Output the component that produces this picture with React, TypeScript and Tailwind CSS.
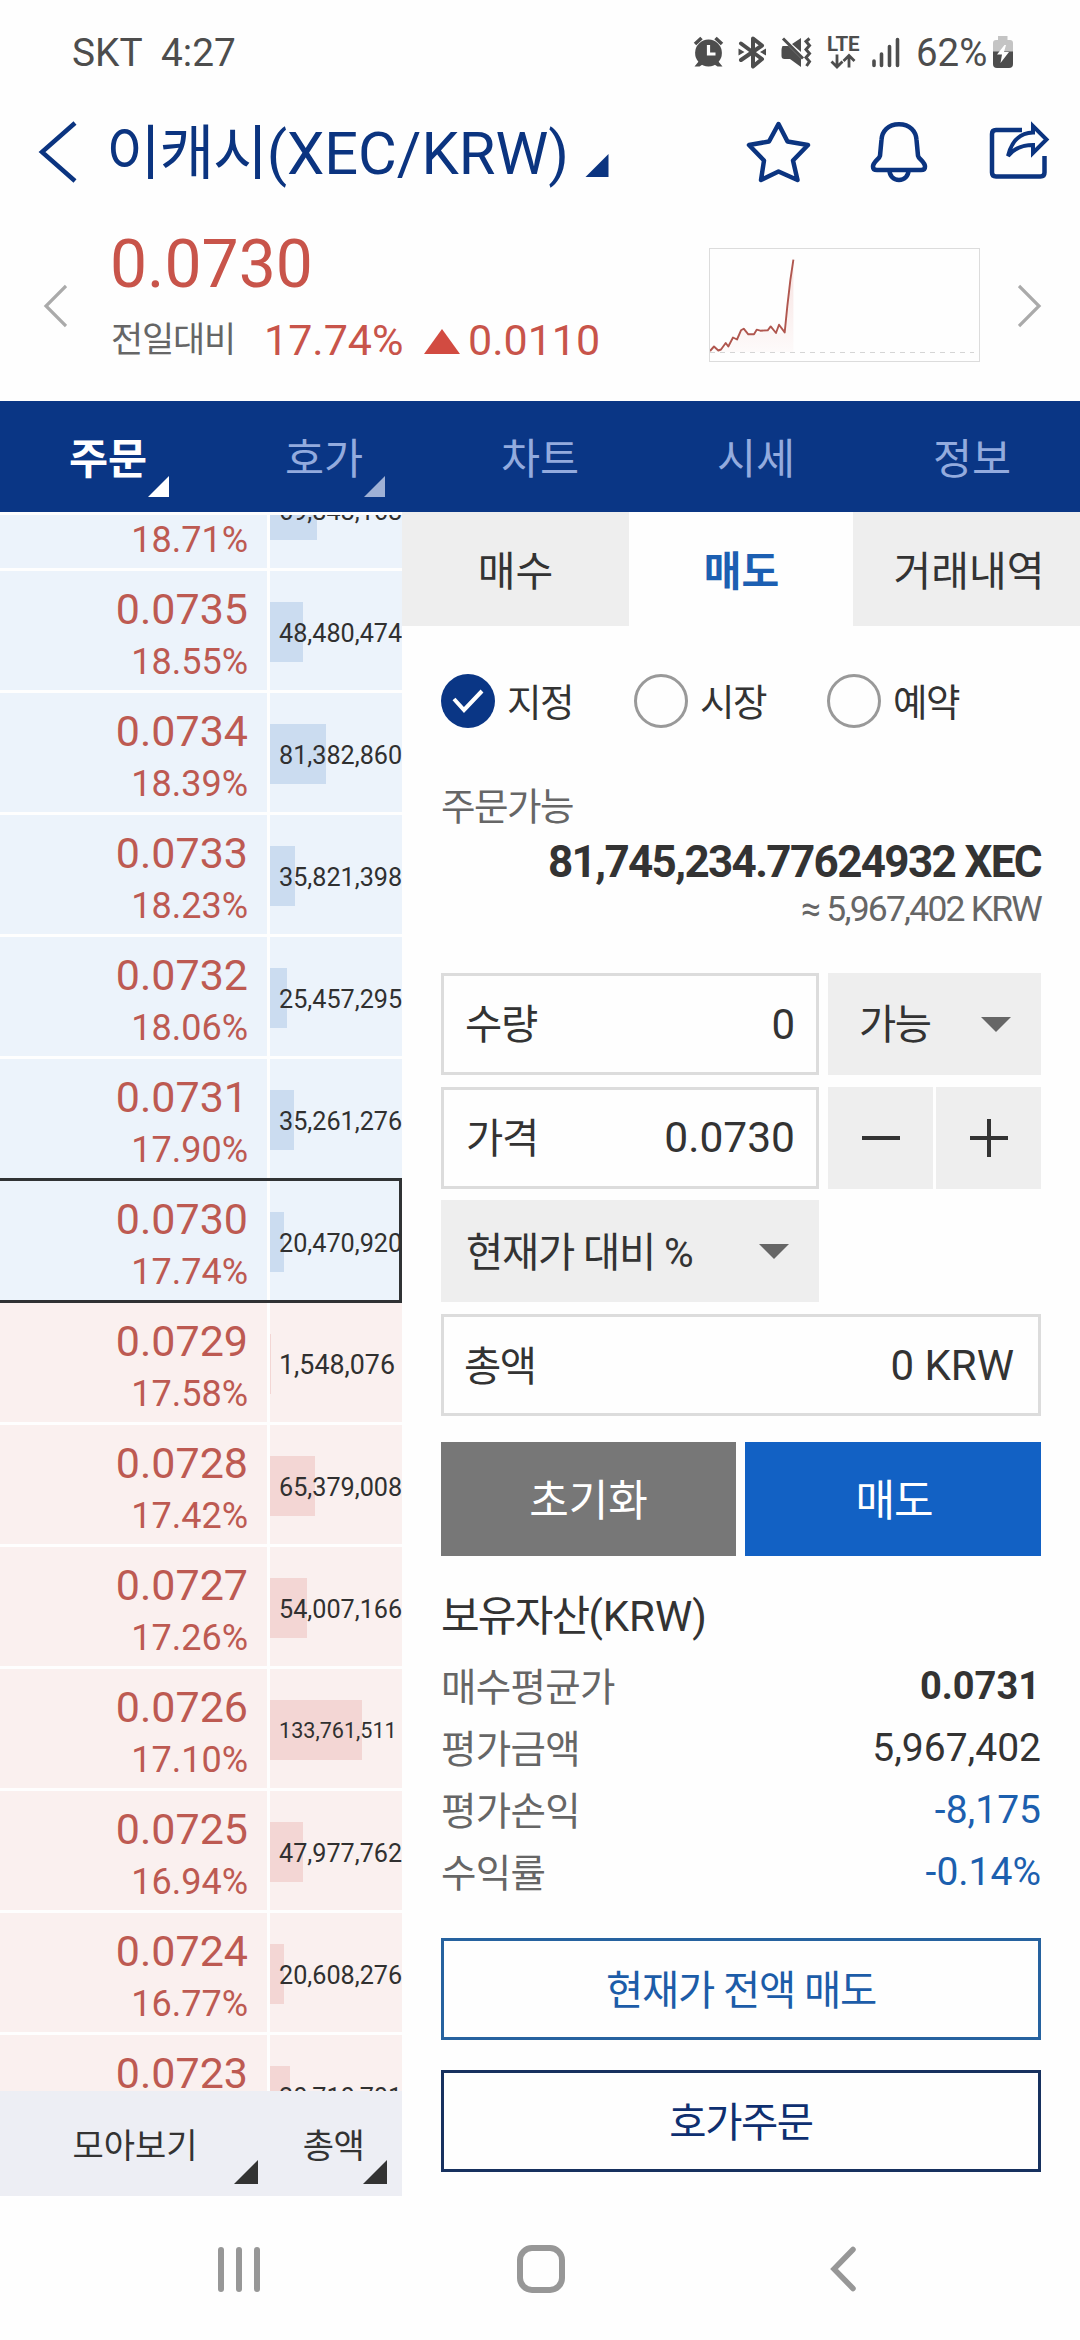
import React from "react";

type Level = { price: string; pct: string; qty: string; bar: number; size: string };

const L = "text-[25.2px]";
const levels: Level[] = [
  { price: "0.0736", pct: "18.71%", qty: "69,848,168", bar: 47, size: L },
  { price: "0.0735", pct: "18.55%", qty: "48,480,474", bar: 33, size: L },
  { price: "0.0734", pct: "18.39%", qty: "81,382,860", bar: 56, size: L },
  { price: "0.0733", pct: "18.23%", qty: "35,821,398", bar: 25, size: L },
  { price: "0.0732", pct: "18.06%", qty: "25,457,295", bar: 17, size: L },
  { price: "0.0731", pct: "17.90%", qty: "35,261,276", bar: 24, size: L },
  { price: "0.0730", pct: "17.74%", qty: "20,470,920", bar: 14, size: L },
  { price: "0.0729", pct: "17.58%", qty: "1,548,076", bar: 1, size: "text-[26.8px]" },
  { price: "0.0728", pct: "17.42%", qty: "65,379,008", bar: 45, size: L },
  { price: "0.0727", pct: "17.26%", qty: "54,007,166", bar: 37, size: L },
  { price: "0.0726", pct: "17.10%", qty: "133,761,511", bar: 92, size: "text-[21.6px]" },
  { price: "0.0725", pct: "16.94%", qty: "47,977,762", bar: 33, size: L },
  { price: "0.0724", pct: "16.77%", qty: "20,608,276", bar: 14, size: L },
  { price: "0.0723", pct: "16.61%", qty: "20,710,701", bar: 20, size: L },
];
const CURRENT = 6;

function Corner({ className }: { className: string }) {
  return (
    <svg viewBox="0 0 24 24" className={className} fill="currentColor">
      <path d="M24 0V24H0Z" />
    </svg>
  );
}

function Caret() {
  return (
    <svg viewBox="0 0 30 15" className="h-[15px] w-[30px] text-[#666]" fill="currentColor">
      <path d="M0 0H30L15 15Z" />
    </svg>
  );
}

function StatusBar() {
  return (
    <div className="flex h-[92px] items-start pt-[30px] pl-[72px] text-[38.8px] leading-[45px] text-[#4d4d4d]">
      <span className="w-[89px]">SKT</span>
      <span>4:27</span>
      <svg viewBox="690 1 226 45" className="ml-auto h-[45px] w-[226px]" fill="none" stroke="#4d4d4d">
        <g fill="#4d4d4d" stroke="none">
          <circle cx="708.5" cy="24" r="13.4" />
          <path d="M699 32l-4.500 5.500h5l3-2zM718 32l4.500 5.500h-5l-3-2z" />
        </g>
        <path d="M695 15l6.500-6M722 15l-6.500-6" strokeWidth="3.600" />
        <path d="M708.500 16v9h7" stroke="#fff" strokeWidth="3.200" />
        <path d="M741 14.500l21 15.500-9 7.500V9.500l9 7-21 14.500" strokeWidth="4" strokeLinejoin="round" strokeLinecap="round" />
        <path d="M738.500 19.500l6 3.500-6 3.500zM766 19.500l-6 3.500 6 3.500z" fill="#4d4d4d" stroke="none" />
        <path d="M782.500 17h6l12.500 12.500v8.500l-11-8h-5.500q-3 0-3-3v-6q0-2 1-4zM801 9v14l-9-8z" fill="#4d4d4d" stroke="none" />
        <path d="M783 9.500l20 20" strokeWidth="3" />
        <path d="M809.500 9.500l-3.500 3 3.500 4-3.500 4 3.500 4-3.500 4 3.500 4-3 4.500" strokeWidth="3" />
        <text x="827" y="21.500" fontSize="20.500" fontWeight="700" fill="#4d4d4d" stroke="none" textLength="32.500">LTE</text>
        <path d="M837 25.500v12M831.500 32.500l5.500 5.500 5.500-5.500M849 38.500V26.500M843.500 32l5.500-5.500 5.500 5.500" strokeWidth="2.800" />
        <path d="M874 36.500v-4.500M881.500 36.500V25M889.500 36.500V17.500M897.500 36.500V10.500" strokeWidth="3.600" strokeLinecap="round" />
      </svg>
      <span className="w-[77px] text-[38.4px]">62%</span>
      <svg viewBox="0 0 20 32" className="mt-[6px] mr-[67px] h-[32px] w-[20px] shrink-0">
        <path d="M5 0h9.500v4H17q3 0 3 3v9H0V7q0-3 3-3h2z" fill="#c4c4c4" />
        <path d="M0 15.500h20V28q0 4-4 4H4q-4 0-4-4z" fill="#4d4d4d" />
        <path d="M11.500 9L4 18.500h5L7.500 27 16 16h-5l2-7z" fill="#fff" />
      </svg>
    </div>
  );
}

function Header() {
  return (
    <div className="flex h-[123px] pt-[28px] text-[#0b3480]">
      <svg viewBox="0 0 40 64" className="ml-[38px] h-[64px] w-[40px]" fill="none" stroke="currentColor" strokeWidth="4.500">
        <path d="M37 3L4 32l33 29" />
      </svg>
      <h1 className="mt-[-1px] ml-[28px] h-[70px] w-[463px] text-[59.5px] leading-[70px] whitespace-nowrap">
        <span className="tracking-[-1.2px]">이캐시</span>(XEC/KRW)
      </h1>
      <Corner className="mt-[34px] ml-[16px] h-[23px] w-[24px]" />
      <svg viewBox="740 120 320 66" className="mr-[20px] ml-auto h-[66px] w-[320px]" fill="none" stroke="currentColor" strokeWidth="4.500" strokeLinejoin="round">
        <path d="M778.500 124l9 17.500 20.500 3.500-15 15.500 4.500 19.500-19-8.500-17.500 8.500 3-19.500-15-15.500 20-3.500z" />
        <path d="M899 124.200c-11 0-17 7-17.500 15.500l-1.500 16c-.7 3.500-7 6-7 11 0 2 1.500 3.300 4 3.300h44c2.500 0 4-1.300 4-3.300 0-5-6.300-7.500-7-11l-1.500-16c-.5-8.500-6.500-15.500-17.500-15.500z" />
        <path d="M889.500 170c0 6 4 10 9.500 10s9.500-4 9.500-10" />
        <path d="M1022 130h-26q-4 0-4 4v38.500q0 4 4 4h44.500q4 0 4-4V156" strokeLinejoin="miter" />
        <path d="M1008 156c4-16 12-23 25-23.500V126l13.500 13.500L1033 153v-8c-12 0-19 3.500-25 11z" strokeWidth="4" strokeLinejoin="miter" />
      </svg>
    </div>
  );
}

function Ticker() {
  return (
    <div className="flex h-[186px]">
      <svg viewBox="0 0 24 44" className="mt-[69px] ml-[43px] h-[44px] w-[24px]" fill="none" stroke="#aaa" strokeWidth="3.200">
        <path d="M23 2L3 22l20 20" />
      </svg>
      <div className="ml-[43px] w-[599px] text-[#c8544a]">
        <div className="mt-[11px] h-[78px] text-[66px] leading-[78px]">0.0730</div>
        <div className="mt-[11px] flex h-[50px] pl-[1px] text-[43px] leading-[50px]">
          <span className="mt-[1px] w-[153px] text-[35px] tracking-[-1.2px] text-[#666]">전일대비</span>
          <span className="w-[160px]">17.74%</span>
          <svg viewBox="0 0 36 25" className="mt-[14px] mr-[8px] h-[25px] w-[36px]" fill="#d24b41">
            <path d="M18 0L36 25H0Z" />
          </svg>
          <span>0.0110</span>
        </div>
      </div>
      <div className="mt-[33px] h-[114px] w-[271px] shrink-0 border border-[#dcdcdc]">
        <svg viewBox="1 1 269 112" className="h-[112px] w-[269px]" fill="none">
          <defs>
            <linearGradient id="fade" x1="0" y1="0" x2="0" y2="1">
              <stop offset="0" stopColor="#d24b41" stopOpacity="0.16" />
              <stop offset="1" stopColor="#d24b41" stopOpacity="0.02" />
            </linearGradient>
          </defs>
          <path d="M1 103L9 102 19 98 28 91.500 34.700 80.700 39.300 86.300 45 86.300 58.700 82.300 67 85 75.700 84.400 78.300 58.400 81.400 31.700 84.400 11.700V104H1z" fill="url(#fade)" />
          <path d="M1 104.500h264" stroke="#d5d5d5" strokeDasharray="5 5" />
          <path
            d="M1 103L5 98.500 9.300 102.500 12 101.500 16.700 95 19.300 98.500 24 89.500 28 91.500 32 82.300 34.700 80.700 39.300 86.300 45 86.300 47.700 81.700 51.300 82.700 58.700 82.300 61.700 78.400 67 85 70 76.700 75.700 84.400 78.300 58.400 81.400 31.700 84.400 11.700"
            stroke="#b0574f"
            strokeWidth="1.900"
            strokeLinejoin="round"
          />
        </svg>
      </div>
      <svg viewBox="0 0 24 44" className="mt-[69px] ml-[38px] h-[44px] w-[24px]" fill="none" stroke="#aaa" strokeWidth="3.200">
        <path d="M1 2l20 20L1 42" />
      </svg>
    </div>
  );
}

function MainTabs() {
  const names = ["주문", "호가", "차트", "시세", "정보"];
  return (
    <nav className="grid h-[111px] grid-cols-5 bg-[#0a3685] text-center text-[42.500px] leading-[117px] text-[#93abde]">
      {names.map((n, i) => (
        <div key={n} className={i === 0 ? "relative h-[111px] font-bold text-white" : "relative h-[111px]"}>
          {n}
          {i < 2 && <Corner className={i === 0 ? "absolute top-[75px] left-[148px] h-[21px] w-[21px] text-white" : "absolute top-[75px] left-[148px] h-[21px] w-[21px] text-[#9fb1d6]"} />}
        </div>
      ))}
    </nav>
  );
}

function OrderBook() {
  return (
    <section className="flex h-[1684px] w-[402px] flex-col pt-[3px]">
      <div className="h-[1576px] overflow-hidden">
        <div className="-mt-[66px] flex flex-col gap-[3px]">
          {levels.map((v, i) => {
            const ask = i <= CURRENT;
            return (
              <div key={v.price} className="relative flex h-[119px] shrink-0 gap-[3px]">
                <div className={ask ? "w-[267px] bg-[#ecf3fb] pt-[13px] pr-[19px] text-right text-[#bd5a52]" : "w-[267px] bg-[#faf0ef] pt-[13px] pr-[19px] text-right text-[#bd5a52]"}>
                  <div className="h-[50px] text-[43px] leading-[50px]">{v.price}</div>
                  <div className="mt-[6px] h-[44px] text-[36px] leading-[44px]">{v.pct}</div>
                </div>
                <div className={ask ? "relative flex w-[132px] items-center bg-[#ecf3fb]" : "relative flex w-[132px] items-center bg-[#faf0ef]"}>
                  <div className={ask ? "absolute top-[31px] left-0 h-[60px] bg-[#cbdcf0]" : "absolute top-[31px] left-0 h-[60px] bg-[#f3d6d4]"} style={{ width: v.bar }} />
                  <span className={`relative mt-[6px] ml-[9px] whitespace-nowrap text-[#303030] ${v.size}`}>{v.qty}</span>
                </div>
                {i === CURRENT && <div className="absolute -top-[3px] -bottom-[3px] left-0 w-[402px] border-[3px] border-l-0 border-[#303234]" />}
              </div>
            );
          })}
        </div>
      </div>
      <div className="flex h-[105px] bg-[#edeef4] text-center text-[34px] leading-[110px] text-[#333]">
        <div className="relative h-[105px] w-[270px]">
          모아보기
          <Corner className="absolute top-[69px] left-[234px] h-[24px] w-[24px]" />
        </div>
        <div className="relative h-[105px] w-[127px] tracking-[-0.5px]">
          총액
          <Corner className="absolute top-[69px] left-[93px] h-[24px] w-[24px]" />
        </div>
      </div>
    </section>
  );
}

function Radio({ label, on }: { label: string; on?: boolean }) {
  return (
    <label className="flex w-[193px] items-center">
      {on ? (
        <span className="flex h-[54px] w-[54px] items-center justify-center rounded-full bg-[#0a3685]">
          <svg viewBox="0 0 32 24" className="h-[24px] w-[32px]" fill="none" stroke="#fff" strokeWidth="4">
            <path d="M2 10l10 11L30 2" />
          </svg>
        </span>
      ) : (
        <span className="h-[54px] w-[54px] rounded-full border-[3px] border-[#999]" />
      )}
      <span className="mt-[5px] ml-[12px] text-[37.500px] tracking-[-1.5px] text-[#333]">{label}</span>
    </label>
  );
}

function OrderForm() {
  const assets = [
    ["매수평균가", "0.0731", "font-bold text-[38px] pr-[1px]"],
    ["평가금액", "5,967,402", "text-[39px]"],
    ["평가손익", "-8,175", "text-[39px] text-[#1c5fae]"],
    ["수익률", "-0.14%", "text-[39px] text-[#1c5fae]"],
  ];
  return (
    <section className="w-[678px] text-[#333]">
      <div className="flex h-[114px] text-center text-[41px] leading-[120px]">
        <div className="h-[114px] w-[227px] bg-[#eee]">매수</div>
        <div className="h-[114px] w-[224px] pl-[1px] font-bold text-[#1c5fb2]">매도</div>
        <div className="h-[114px] w-[227px] bg-[#eee] pl-[5px]">거래내역</div>
      </div>
      <div className="pr-[39px] pl-[39px]">
        <div className="mt-[48px] flex h-[54px]">
          <Radio label="지정" on />
          <Radio label="시장" />
          <Radio label="예약" />
        </div>
        <div className="mt-[54px] h-[50px] text-[37.500px] leading-[50px] tracking-[-1.5px] text-[#666]">주문가능</div>
        <div className="mt-[4px] h-[52px] text-right text-[44px] leading-[52px] font-bold tracking-[-1.64px] whitespace-nowrap">81,745,234.77624932 XEC</div>
        <div className="h-[42px] text-right text-[35.500px] leading-[42px] tracking-[-1.8px] text-[#666]">≈ 5,967,402 KRW</div>
        <div className="mt-[43px] flex h-[102px] justify-between">
          <div className="flex w-[378px] items-center justify-between border-[3px] border-[#dcdcdc] pr-[21px] pl-[21px] text-[42px]">
            <span className="mt-[3px] text-[40.500px] tracking-[-1.2px]">수량</span>
            <span>0</span>
          </div>
          <div className="flex w-[213px] items-center justify-between bg-[#eee] pr-[30px] pl-[31px] text-[40.500px] tracking-[-1.4px]">
            <span className="mt-[3px]">가능</span>
            <Caret />
          </div>
        </div>
        <div className="mt-[12px] flex h-[102px]">
          <div className="flex w-[378px] items-center justify-between border-[3px] border-[#dcdcdc] pr-[21px] pl-[22px] text-[42.500px]">
            <span className="mt-[3px] text-[40.500px] tracking-[-1.2px]">가격</span>
            <span>0.0730</span>
          </div>
          <div className="ml-[9px] flex w-[105px] items-center justify-center bg-[#eee]">
            <div className="h-[4px] w-[38px] bg-[#333]" />
          </div>
          <div className="ml-[3px] flex w-[105px] items-center justify-center bg-[#eee]">
            <svg viewBox="0 0 38 38" className="h-[38px] w-[38px]" stroke="#333" strokeWidth="4">
              <path d="M19 0V38M0 19H38" />
            </svg>
          </div>
        </div>
        <div className="mt-[11px] flex h-[102px] w-[378px] items-center justify-between bg-[#eee] pr-[30px] pl-[25px] text-[40.500px] tracking-[-1.2px]">
          <span className="mt-[4px]">현재가 대비 %</span>
          <Caret />
        </div>
        <div className="mt-[12px] flex h-[102px] items-center justify-between border-[3px] border-[#dcdcdc] pr-[24px] pl-[20px] text-[42px]">
          <span className="mt-[4px] text-[40.500px] tracking-[-1.4px]">총액</span>
          <span className="mt-px">0 KRW</span>
        </div>
        <div className="mt-[26px] flex h-[114px] gap-[9px] text-center text-[43px] leading-[119px] text-white">
          <div className="h-[114px] w-[295px] bg-[#777]">초기화</div>
          <div className="h-[114px] w-[296px] bg-[#1261c4] pl-[2px] tracking-[-1px]">매도</div>
        </div>
        <div className="mt-[34px] h-[54px] text-[42px] leading-[54px]">
          <span className="tracking-[-1.8px]">보유자산</span>(KRW)
        </div>
        <div className="mt-[11px]">
          {assets.map(([k, v, c]) => (
            <div key={k} className="flex h-[62px] items-center justify-between">
              <span className="mt-[3px] text-[38.500px] tracking-[-0.7px] text-[#666]">{k}</span>
              <span className={c}>{v}</span>
            </div>
          ))}
        </div>
        <div className="mt-[35px] h-[102px] border-[3px] border-[#26629f] text-center text-[40.500px] leading-[101px] tracking-[-1.2px] text-[#1c5ca8]">현재가 전액 매도</div>
        <div className="mt-[30px] h-[102px] border-[3px] border-[#17315f] text-center text-[40.500px] leading-[101px] tracking-[-1.4px] text-[#0e2f70]">호가주문</div>
      </div>
    </section>
  );
}

export default function App() {
  return (
    <div className="flex h-[2340px] w-[1080px] flex-col overflow-hidden bg-[#fefefe] font-['Roboto','Noto_Sans_CJK_KR',sans-serif]">
      <StatusBar />
      <Header />
      <Ticker />
      <MainTabs />
      <main className="flex h-[1684px]">
        <OrderBook />
        <OrderForm />
      </main>
      <footer className="flex h-[144px] items-center pl-[218px]">
        <div className="mt-[2px] flex gap-[12px]">
          <div className="h-[45px] w-[6px] rounded-full bg-[#979797]" />
          <div className="h-[45px] w-[6px] rounded-full bg-[#979797]" />
          <div className="h-[45px] w-[6px] rounded-full bg-[#979797]" />
        </div>
        <div className="mt-[2px] ml-[257px] h-[48px] w-[48px] rounded-[15px] border-[6px] border-[#979797]" />
        <svg viewBox="0 0 28 48" className="mt-[2px] ml-[264px] h-[48px] w-[28px]" fill="none" stroke="#979797" strokeWidth="5.500" strokeLinecap="round" strokeLinejoin="miter">
          <path d="M24 4.500L5 24l19 19.500" />
        </svg>
      </footer>
    </div>
  );
}
